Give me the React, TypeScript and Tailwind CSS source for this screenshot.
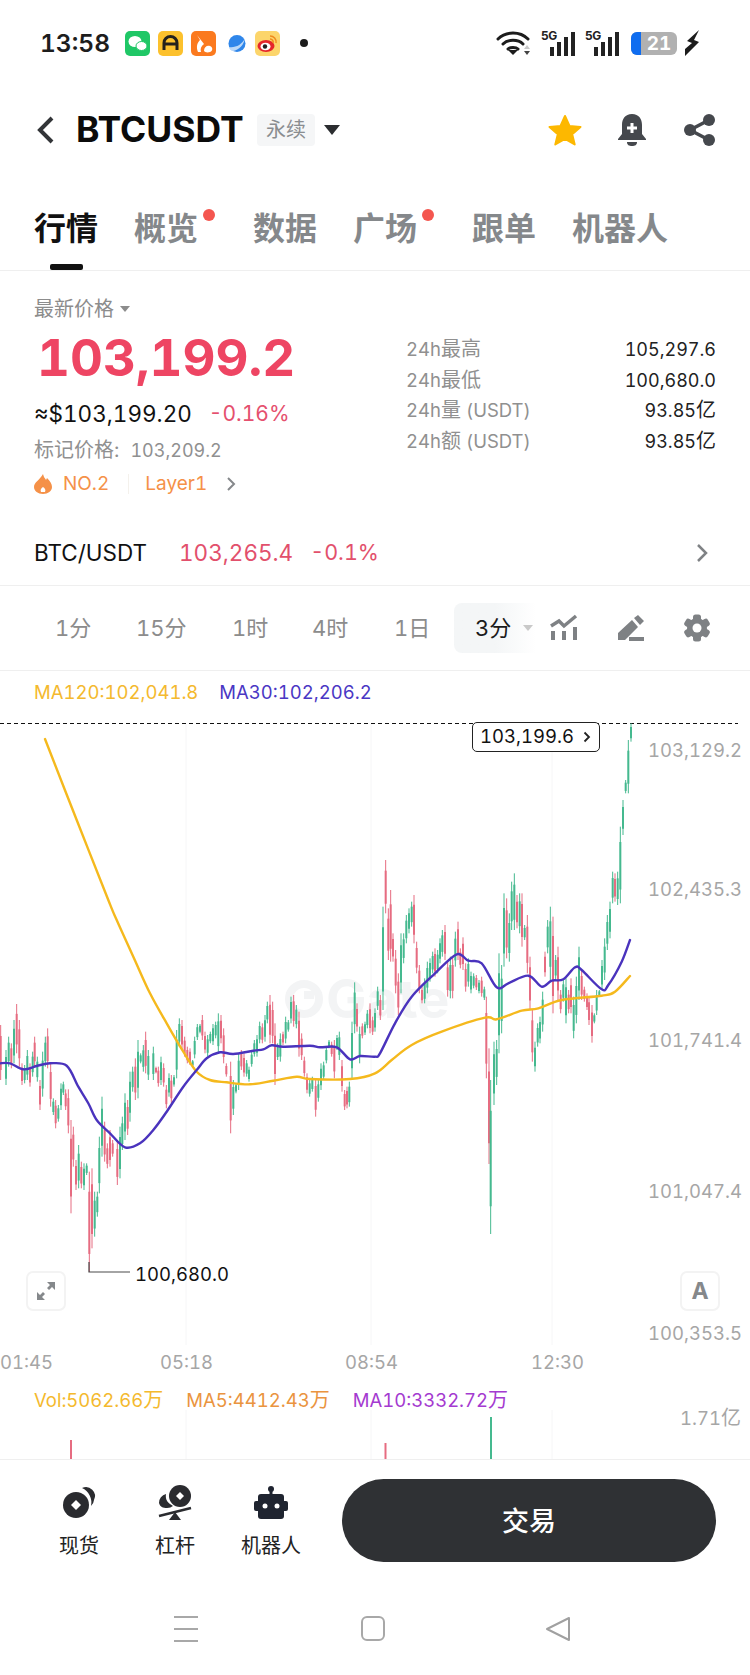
// Contract detail screen: status bar, ticker summary, candle chart, trade bar
type Candle = [number, number, number, number];

// candles read off the reference: x, wick top, wick bottom, 1 = up
const leftCandles: Candle[] = [
  [2,375,540,0],[18,450,555,1],[26,410,500,1],[34,430,505,0],[42,360,490,1],[50,312,460,0],[58,360,500,0],[66,490,555,0],[74,495,550,1],[82,450,540,1],
  [90,490,560,0],[98,455,530,1],[104,410,500,0],[112,470,545,1],[120,540,630,0],[128,455,590,1],[136,410,500,1],[143,385,505,0],[152,490,620,0],[160,595,645,1],
  [167,600,685,0],[175,615,665,1],[183,550,630,1],[190,545,585,1],[197,568,630,0],[205,568,700,0],[213,660,940,0],[220,680,800,0],[228,780,870,0],[236,735,865,1],
  [244,785,865,0],[252,790,870,1],[260,790,825,1],[268,815,1116,0],[276,805,1045,0],[284,875,1010,1],[292,875,950,1],[298,710,880,1],[306,590,770,1],[314,665,785,0],
  [322,730,805,0],[330,690,800,0],[338,720,770,0],[352,720,855,0],[360,680,835,1],[367,650,750,1],[375,580,720,1],[383,600,705,0],[390,515,665,1],[398,500,575,1],
  [406,475,600,0],[414,420,595,1],[422,460,490,1],[430,435,515,1],[437,395,520,0],[445,450,540,1],[460,440,540,1],[468,500,520,0],[475,500,560,0],[483,470,555,1],
  [491,490,560,0],[499,555,625,0],[507,520,590,1],[514,525,610,0],[522,525,560,1],[530,390,535,1],[538,355,440,1],[546,360,450,0],[554,410,470,0],[562,440,490,0],
  [570,445,495,0],[578,480,500,1],[584,410,475,1],[592,372,420,1],[600,372,400,1],[607,345,420,0],[615,395,460,0],[623,405,470,1],[631,395,430,1],[639,372,435,1],
  [647,365,415,1],[655,340,460,1],[663,345,430,0],[671,385,490,0],[679,490,530,0],[692,485,700,0],[700,540,645,1],[708,550,580,1],[716,460,570,1],[724,450,510,0],
  [732,460,530,0],[740,480,530,1],[747,500,545,1],[755,455,500,1],[763,420,470,1],[771,405,470,1],[779,365,430,1],[787,370,430,0],[795,345,425,1],[802,305,370,1],
  [810,285,430,0],[818,305,430,0],[825,370,555,0],[833,430,480,1],[841,400,485,1],[849,395,435,0],[857,350,430,1],[865,360,395,1],[873,290,370,1],[881,285,380,0],
  [889,315,385,1],[897,335,470,0],[905,400,480,0],[913,470,530,0],[921,520,580,0],[929,540,590,1],[937,530,575,1],[947,535,650,0],[955,540,605,1],[963,490,570,1],
  [971,485,540,1],[979,440,490,1],[987,420,445,1],[995,425,470,0],[1003,420,535,0],[1011,405,450,1],[1018,395,480,1],[1026,480,575,0],[1034,570,630,0],[1041,560,625,0],
  [1048,545,620,1],[1056,365,535,1],[1064,247,400,1],[1071,310,395,0],[1079,380,490,1],[1087,370,415,0],[1095,365,405,1],[1102,330,385,1],[1110,310,400,0],[1118,350,405,0],
];

const rightCandles: Candle[] = [
  [0,475,545,1],[8,410,480,1],[16,435,510,0],[24,170,480,1],[32,30,190,0],[40,175,330,0],[47,120,335,0],[54,250,335,0],[62,300,430,0],[70,370,495,0],
  [78,250,430,1],[86,250,340,1],[94,195,280,1],[102,175,250,1],[110,155,230,1],[117,135,280,0],[125,275,370,0],[133,345,430,0],[141,410,460,0],[149,385,460,1],
  [157,335,430,1],[165,325,395,1],[173,305,370,1],[180,295,380,0],[188,300,370,1],[195,265,340,1],[202,240,320,1],[210,225,330,0],[218,330,440,0],[226,320,445,1],
  [233,320,445,0],[241,245,350,1],[249,215,330,0],[256,295,355,0],[264,262,360,0],[272,340,425,0],[280,325,410,1],[288,365,430,1],[296,370,415,1],[304,375,420,0],
  [312,390,430,1],[320,380,440,0],[328,410,450,1],[334,440,685,0],[342,595,942,0],[347,690,1152,1],[357,575,765,1],[365,570,705,1],[372,310,610,1],[380,345,550,1],
  [387,130,350,1],[395,145,325,0],[403,190,335,1],[410,95,240,1],[418,70,240,1],[426,135,235,0],[434,130,250,1],[441,130,290,0],[449,225,270,1],[457,195,370,0],
  [465,320,480,0],[472,480,635,0],[480,575,665,1],[488,520,590,1],[495,500,580,1],[503,425,545,1],[510,305,380,0],[518,210,310,1],[526,170,390,1],[534,200,490,0],
  [542,315,390,1],[549,290,450,0],[557,420,490,0],[565,390,455,1],[573,385,520,1],[581,420,490,0],[588,385,490,0],[596,440,565,1],[604,380,520,1],[612,290,450,1],
  [620,360,450,0],[628,410,455,0],[636,430,480,0],[642,440,525,0],[651,465,578,0],[658,490,520,1],[665,420,495,1],[673,420,440,1],[681,330,420,1],[689,265,390,1],
  [697,195,300,1],[705,155,265,1],[713,65,160,1],[720,70,155,0],[728,65,165,1],
];

const topCandles: Candle[] = [
  [736,740,970,1],[744,660,765,1],[752,600,640,1],[760,480,640,1],[768,430,485,1],
];

const purpleA = [[0,490],[30,490],[70,508],[110,498],[150,490],[200,497],[235,560],[265,610],[290,660],[330,700],[375,742],[420,730],[460,690],[500,635],[550,560],[590,510],[620,475],[660,457],[700,462],[760,452],[790,448],[815,436],[850,440],[930,437],[960,442],[1010,442],[1050,478],[1080,468],[1125,470]];
const purpleB = [[15,610],[60,520],[110,440],[180,370],[245,313],[280,332],[320,340],[365,412],[400,400],[460,377],[500,410],[530,392],[565,388],[600,352],[620,360],[680,418],[700,405],[740,335],[765,270]];
const yellowA = [[135,-483],[230,-240],[325,0],[350,60],[400,170],[450,280],[500,370],[550,455],[590,515],[630,540],[680,547],[750,553],[820,542],[890,530],[930,537],[1050,537],[1125,520]];
const yellowB = [[50,630],[110,585],[200,545],[330,503],[365,508],[440,482],[490,475],[560,450],[680,437],[720,425],[765,378]];

const fromLeft = ([x, y]: number[]) => [x / 3, 900 + y / 3];
const fromRight = ([x, y]: number[]) => [375 + x / 3, 850 + y / 3];

function smooth(points: number[][]) {
  let d = `M${points[0][0]} ${points[0][1]}`;
  for (let i = 0; i < points.length - 1; i++) {
    const p0 = points[i - 1] ?? points[i];
    const p1 = points[i];
    const p2 = points[i + 1];
    const p3 = points[i + 2] ?? p2;
    const c1x = p1[0] + (p2[0] - p0[0]) / 6;
    const c1y = p1[1] + (p2[1] - p0[1]) / 6;
    const c2x = p2[0] - (p3[0] - p1[0]) / 6;
    const c2y = p2[1] - (p3[1] - p1[1]) / 6;
    d += ` C${c1x.toFixed(1)} ${c1y.toFixed(1)} ${c2x.toFixed(1)} ${c2y.toFixed(1)} ${p2[0].toFixed(1)} ${p2[1].toFixed(1)}`;
  }
  return d;
}

const candles = [
  ...leftCandles.map(([x, t, b, up]) => ({ x: x / 3, top: 900 + t / 3, bottom: 900 + b / 3, up })),
  ...rightCandles.map(([x, t, b, up]) => ({ x: 375 + x / 3, top: 850 + t / 3, bottom: 850 + b / 3, up })),
  ...topCandles.map(([x, t, b, up]) => ({ x: 375 + x / 3, top: 580 + t / 3, bottom: 580 + b / 3, up })),
];

function CandleChart() {
  return (
    <svg className="absolute inset-0 h-full w-full" viewBox="0 671 750 788">
      {[186, 371, 552].map((x) => (
        <g key={x} stroke="#f6f6f7" strokeWidth="1">
          <line x1={x} y1="724" x2={x} y2="1345" />
          <line x1={x} y1="1410" x2={x} y2="1459" />
        </g>
      ))}
      <circle cx="304" cy="999" r="15" fill="none" stroke="#f3f4f5" strokeWidth="8" />
      <rect x="304" y="991" width="10" height="8" fill="#f3f4f5" />
      <line x1="0" y1="723.5" x2="738" y2="723.5" stroke="#111" strokeWidth="1" strokeDasharray="4 3" />
      {candles.map((c, i) => {
        const color = c.up ? "#45b98f" : "#e66c81";
        const h = c.bottom - c.top;
        return (
          <g key={i} stroke={color}>
            <line x1={c.x} y1={c.top} x2={c.x} y2={c.bottom} strokeWidth="1" />
            <line x1={c.x} y1={c.top + h * 0.2} x2={c.x} y2={c.bottom - h * 0.18} strokeWidth="2" />
          </g>
        );
      })}
      <path d={smooth([...yellowA.map(fromLeft), ...yellowB.map(fromRight)])} fill="none" stroke="#f5b91d" strokeWidth="2.4" strokeLinecap="round" />
      <path d={smooth([...purpleA.map(fromLeft), ...purpleB.map(fromRight)])} fill="none" stroke="#4a33bd" strokeWidth="2.4" strokeLinecap="round" />
      <path d="M89 1262V1272H130" fill="none" stroke="#4a4a4a" strokeWidth="1.2" />
      <line x1="71" y1="1440" x2="71" y2="1459" stroke="#e66c81" strokeWidth="2" />
      <line x1="385.500" y1="1443" x2="385.500" y2="1459" stroke="#e66c81" strokeWidth="2" />
      <line x1="491" y1="1417" x2="491" y2="1459" stroke="#45b98f" strokeWidth="2" />
    </svg>
  );
}

function AppIcons() {
  return (
    <div className="ml-[17px] flex items-center">
      <svg width="25" height="25" viewBox="0 0 25 25">
        <rect width="25" height="25" rx="5" fill="#1fc766" />
        <ellipse cx="10" cy="10.500" rx="6.500" ry="5.500" fill="#fff" />
        <ellipse cx="16.500" cy="15" rx="5.500" ry="4.500" fill="#fff" stroke="#1fc766" />
      </svg>
      <svg className="ml-[8px]" width="25" height="25" viewBox="0 0 25 25">
        <rect width="25" height="25" rx="5" fill="#fcc12d" />
        <path d="M6 19v-7a6.500 6.500 0 0 1 13 0v7M6 13h13" fill="none" stroke="#24211c" strokeWidth="3" />
      </svg>
      <svg className="ml-[8px]" width="25" height="25" viewBox="0 0 25 25">
        <rect width="25" height="25" rx="5" fill="#fb7a1f" />
        <path d="M6 4l3 5c-3 3-4 7-2 12h3c-1-3 0-6 3-8M13 20c0-4 3-6 6-5s3 5 0 6-5 0-6-1z" fill="#fff" />
      </svg>
      <svg className="ml-[10px]" width="22" height="25" viewBox="0 0 22 25">
        <circle cx="11" cy="12.500" r="8.500" fill="#2f86ea" />
        <path d="M3 16c6 1 13-2 16-9-1 7-6 12-12 13-2 0-4-2-4-4z" fill="#bcd9f8" />
      </svg>
      <svg className="ml-[7px]" width="25" height="25" viewBox="0 0 25 25">
        <rect width="25" height="25" rx="5" fill="#fcd56b" />
        <ellipse cx="11" cy="15" rx="8.500" ry="6" fill="#e5262b" />
        <ellipse cx="10.500" cy="15.500" rx="5" ry="3.800" fill="#fff" />
        <circle cx="10" cy="15.500" r="2.200" fill="#222" />
        <path d="M15 5a6 6 0 0 1 6 7M15 8a3 3 0 0 1 3 4" fill="none" stroke="#f08a1d" strokeWidth="1.500" />
      </svg>
      <span className="ml-[20px] h-[8px] w-[8px] rounded-full bg-[#1c1c1c]" />
    </div>
  );
}

function Signal() {
  return (
    <div className="relative h-[26px] w-[34px]">
      <span className="absolute left-0 top-0 text-[12px] font-bold leading-[12px] tracking-[-0.5px] text-[#222]">5G</span>
      <div className="absolute bottom-0 right-0 flex items-end gap-[3px]">
        <span className="h-[9px] w-[4px] bg-[#222]" />
        <span className="h-[14px] w-[4px] bg-[#222]" />
        <span className="h-[19px] w-[4px] bg-[#222]" />
        <span className="h-[24px] w-[4px] bg-[#222]" />
      </div>
    </div>
  );
}

function StatusBar() {
  return (
    <div className="flex h-[86px] items-center pl-[40px] pr-[50px]">
      <span className="w-[68px] whitespace-nowrap text-[24.500px] font-semibold leading-none text-[#1d1d1d]">13:58</span>
      <AppIcons />
      <svg className="ml-auto" width="36" height="26" viewBox="0 0 36 26">
        <path d="M2 9c8-8 22-8 30 0M7 14c5-5 15-5 20 0M12 19c2-2 8-2 10 0" fill="none" stroke="#1c1c1c" strokeWidth="3" strokeLinecap="round" />
        <path d="M17 25l-5-5h10z" fill="#1c1c1c" />
        <path d="M31 15l3 4h-6z" fill="#c9c9c9" />
        <path d="M31 25l3-4h-6z" fill="#444" />
      </svg>
      <div className="ml-[9px]"><Signal /></div>
      <div className="ml-[10px]"><Signal /></div>
      <div className="ml-[12px] flex h-[23px] w-[46px] overflow-hidden rounded-[6px] bg-[#b1b1b1]">
        <span className="h-full w-[10px] bg-[#0f6df0]" />
        <span className="flex-1 text-center text-[19px] font-bold leading-[23px] text-white">21</span>
      </div>
      <svg className="ml-[8px]" width="15" height="26" viewBox="0 0 15 26">
        <path d="M14 0L2 11l5 2-7 6 0 7 14-14-5-2z" fill="#1c1c1c" />
      </svg>
    </div>
  );
}

function Header() {
  return (
    <div className="flex h-[88px] items-center pl-[37px] pr-[34px]">
      <svg width="18" height="28" viewBox="0 0 18 28">
        <path d="M15 2L3 14l12 12" fill="none" stroke="#333538" strokeWidth="4" />
      </svg>
      <h1 className="ml-[21px] w-[168px] whitespace-nowrap text-[35.500px] font-bold leading-none text-[#0b0b0b]">BTCUSDT</h1>
      <span className="ml-[13px] flex h-[32px] w-[58px] items-center justify-center rounded-[4px] bg-[#f5f6f7] text-[20px] text-[#8a8d90]">永续</span>
      <span className="ml-[9px] h-0 w-0 border-x-[8px] border-t-[10px] border-x-transparent border-t-[#2b2d30]" />
      <svg className="ml-auto" width="36" height="34" viewBox="0 0 36 34">
        <path d="M18 3l4.500 10 11 1-8.300 7.200 2.500 10.300L18 26l-9.700 5.500 2.500-10.300L2.500 14l11-1z" fill="#fdb800" stroke="#fdb800" strokeWidth="2" strokeLinejoin="round" />
      </svg>
      <svg className="ml-[33px]" width="32" height="34" viewBox="0 0 32 34">
        <path d="M16 1C9 1 6 6 6 12v9l-4 5v1h28v-1l-4-5v-9c0-6-3-11-10-11z" fill="#45484d" />
        <path d="M11 29h10c0 3-2 4-5 4s-5-1-5-4z" fill="#45484d" />
        <path d="M16 10v10M11 15h10" stroke="#fff" strokeWidth="3" />
      </svg>
      <svg className="ml-[35px]" width="33" height="34" viewBox="0 0 33 34">
        <path d="M26 7L7 17l19 10" fill="none" stroke="#45484d" strokeWidth="3.500" />
        <circle cx="26" cy="7" r="6" fill="#45484d" />
        <circle cx="7" cy="17" r="6" fill="#45484d" />
        <circle cx="26" cy="27" r="6" fill="#45484d" />
      </svg>
    </div>
  );
}

function Tabs() {
  const tabs = [
    { label: "行情", left: "ml-0", active: true },
    { label: "概览", left: "ml-[36px]", dot: true },
    { label: "数据", left: "ml-[55px]" },
    { label: "广场", left: "ml-[36px]", dot: true },
    { label: "跟单", left: "ml-[55px]" },
    { label: "机器人", left: "ml-[36px]" },
  ];
  return (
    <div className="flex h-[97px] border-b border-[#efefef] pl-[34px] pt-[37px]">
      {tabs.map((tab) => (
        <div
          key={tab.label}
          className={`relative h-[36px] text-[32px] font-bold leading-[36px] ${tab.left} ${tab.active ? "text-[#111]" : "text-[#85888b]"}`}
        >
          {tab.label}
          {tab.dot && <span className="absolute -right-[17px] -top-[2px] h-[12px] w-[12px] rounded-full bg-[#f4564f]" />}
          {tab.active && <span className="absolute left-[16px] top-[53px] h-[6px] w-[33px] rounded-[2px] bg-[#111]" />}
        </div>
      ))}
    </div>
  );
}

function Summary() {
  const stats = [
    ["24h", "最高", "", "105,297.6", ""],
    ["24h", "最低", "", "100,680.0", ""],
    ["24h", "量", " (USDT)", "93.85", "亿"],
    ["24h", "额", " (USDT)", "93.85", "亿"],
  ];
  return (
    <div className="flex h-[238px] pl-[34px] pr-[34px]">
      <div className="flex-1 pt-[26px]">
        <div className="flex h-[24px] items-center text-[20px] text-[#8c8c8c]">
          最新价格
          <span className="ml-[6px] h-0 w-0 border-x-[5px] border-t-[6px] border-x-transparent border-t-[#8c8c8c]" />
        </div>
        <div className="ml-[3px] mt-[8px] h-[58px] text-[51px] font-bold leading-[58px] text-[#ee4563]">103,199.2</div>
        <div className="mt-[13px] flex h-[28px] items-center text-[22.500px]">
          <span className="text-[#111]">≈$103,199.20</span>
          <span className="ml-[17px] text-[21px] text-[#e5506e]">-0.16%</span>
        </div>
        <div className="mt-[9px] flex h-[26px] items-center text-[20px] text-[#909090]">
          标记价格:<span className="ml-[11px] text-[18px]">103,209.2</span>
        </div>
        <div className="mt-[8px] flex h-[26px] items-center text-[19px] text-[#f59148]">
          <svg width="18" height="20" viewBox="0 0 18 20">
            <path d="M9 0c1 4 2 4 3 6l1-2c3 3 5 6 5 9 0 4-4 7-9 7s-9-3-9-7c0-5 6-7 9-13zM9 13c-2 1-3 3-2 5h4c1-2 0-4-2-5z" fill="#f59148" fillRule="evenodd" />
          </svg>
          <span className="ml-[11px]">NO.2</span>
          <span className="ml-[19px] h-[20px] w-px bg-[#f4f1ec]" />
          <span className="ml-[16px]">Layer1</span>
          <svg className="ml-[19px]" width="10" height="16" viewBox="0 0 10 16">
            <path d="M2 2l6 6-6 6" fill="none" stroke="#85888b" strokeWidth="2" />
          </svg>
        </div>
      </div>
      <div className="w-[310px] pt-[63px]">
        {stats.map(([pre, cjk, unit, value, suffix]) => (
          <div key={cjk} className="flex h-[30.500px] items-center justify-between text-[18.500px]">
            <span className="text-[#909090]">{pre}<span className="text-[20px]">{cjk}</span>{unit}</span>
            <span className="text-[18px] text-[#222]">{value}<span className="text-[20px]">{suffix}</span></span>
          </div>
        ))}
      </div>
    </div>
  );
}

function SpotRow() {
  return (
    <div className="flex h-[77px] items-center border-b border-[#efefef] pl-[34px] pr-[40px] pt-[11px] text-[22.500px]">
      <span className="w-[118px] text-[#111]">BTC/USDT</span>
      <span className="ml-[27px] text-[#e2506c]">103,265.4</span>
      <span className="ml-[17px] text-[21.500px] text-[#e2506c]">-0.1%</span>
      <svg className="ml-auto" width="15" height="22" viewBox="0 0 15 22">
        <path d="M3 3l8 8-8 8" fill="none" stroke="#7f8285" strokeWidth="2.500" />
      </svg>
    </div>
  );
}

function Timeframes() {
  return (
    <div className="flex h-[85px] items-center border-b border-[#efefef] pl-[55px] text-[22px] text-[#8c8c8c]">
      <span className="w-[81px]">1分</span>
      <span className="w-[96px]">15分</span>
      <span className="w-[80px]">1时</span>
      <span className="w-[82px]">4时</span>
      <span className="w-[60px]">1日</span>
      <div className="flex h-[50px] w-[82px] items-center rounded-l-[8px] bg-linear-to-r from-[#f4f6f7] via-[#f4f6f7] to-white pl-[21px] text-[#1b1b1b]">
        3分
        <span className="ml-[12px] h-0 w-0 border-x-[5px] border-t-[6px] border-x-transparent border-t-[#c9c9c9]" />
      </div>
      <svg className="ml-[14px]" width="28" height="28" viewBox="0 0 28 28">
        <path d="M1 12l8-5 5 5 12-10" fill="none" stroke="#7e8184" strokeWidth="3.500" />
        <path d="M1 17h4v9H1zM12 17h4v9h-4zM23 13h4v13h-4z" fill="#7e8184" />
      </svg>
      <svg className="ml-[39px]" width="28" height="28" viewBox="0 0 28 28">
        <path d="M1 26v-7L15 6l6 7-13 13zM17 4l4-3 6 6-4 4z" fill="#7e8184" />
        <rect x="12" y="23" width="15" height="4" fill="#7e8184" />
      </svg>
      <svg className="ml-[39px]" width="26" height="28" viewBox="0 0 26 28">
        <circle cx="13" cy="14" r="10" fill="#7e8184" />
        {[0, 60, 120, 180, 240, 300].map((a) => (
          <rect key={a} x="9" y="0.500" width="8" height="8" rx="2.500" fill="#7e8184" transform={`rotate(${a} 13 14)`} />
        ))}
        <circle cx="13" cy="14" r="4.500" fill="#fff" />
      </svg>
    </div>
  );
}

function Chart() {
  const axis = [
    ["103,129.2", "top-[67px]"],
    ["102,435.3", "top-[206px]"],
    ["101,741.4", "top-[357px]"],
    ["101,047.4", "top-[508px]"],
    ["100,353.5", "top-[650px]"],
  ];
  const times = [
    ["01:45", "left-0"],
    ["05:18", "left-[160px]"],
    ["08:54", "left-[345px]"],
    ["12:30", "left-[531px]"],
  ];
  return (
    <div className="relative h-[788px] overflow-hidden">
      <div className="absolute left-[326px] top-[299px] text-[54px] font-bold leading-[58px] text-[#f3f4f5]">Gate</div>
      <CandleChart />
      <div className="relative flex h-[44px] items-center pl-[34px] text-[18.500px]">
        <span className="text-[#f4b92e]">MA120:102,041.8</span>
        <span className="ml-[21px] text-[#4a37c4]">MA30:102,206.2</span>
      </div>
      <div className="absolute left-[472px] top-[51px] flex h-[30px] w-[128px] items-center rounded-[5px] border border-[#222] bg-white pl-[7px] text-[18.500px] text-[#111]">
        103,199.6
        <svg className="ml-[9px]" width="8" height="12" viewBox="0 0 8 12">
          <path d="M1.500 1.500L6 6l-4.500 4.500" fill="none" stroke="#222" strokeWidth="1.800" />
        </svg>
      </div>
      {axis.map(([label, top]) => (
        <span key={label} className={`absolute right-[8px] text-[18.500px] leading-[24px] text-[#a6a6a6] ${top}`}>{label}</span>
      ))}
      {times.map(([label, left]) => (
        <span key={label} className={`absolute top-[679px] text-[18.500px] leading-[24px] text-[#a6a6a6] ${left}`}>{label}</span>
      ))}
      <span className="absolute left-[135px] top-[591px] text-[18.500px] leading-[24px] text-[#111]">100,680.0</span>
      <button className="absolute left-[26px] top-[600px] flex h-[40px] w-[40px] items-center justify-center rounded-[7px] border-2 border-[#f3f3f3] bg-white">
        <svg width="20" height="20" viewBox="0 0 20 20">
          <path d="M19 1v8l-3-3-3 3-2-2 3-3-3-3zM1 19v-8l3 3 3-3 2 2-3 3 3 3z" fill="#85888b" />
        </svg>
      </button>
      <button className="absolute left-[680px] top-[600px] flex h-[40px] w-[40px] items-center justify-center rounded-[7px] border-2 border-[#f3f3f3] bg-white text-[23px] font-bold text-[#85888b]">A</button>
      <div className="absolute left-[34px] top-[717px] flex h-[24px] items-center text-[18.500px]">
        <span className="text-[#f4b92e]">Vol:5062.66<span className="text-[20px]">万</span></span>
        <span className="ml-[23px] text-[#ea9440]">MA5:4412.43<span className="text-[20px]">万</span></span>
        <span className="ml-[23px] text-[#a43ad0]">MA10:3332.72<span className="text-[20px]">万</span></span>
      </div>
      <span className="absolute right-[9px] top-[735px] text-[18.500px] leading-[24px] text-[#a6a6a6]">1.71<span className="text-[20px]">亿</span></span>
    </div>
  );
}

function TradeBar() {
  return (
    <div className="flex h-[121px] border-t border-[#efefef] pl-[31px] pr-[34px]">
      <div className="flex w-[96px] flex-col items-center pt-[25px]">
        <svg width="36" height="36" viewBox="0 0 36 36">
          <path d="M21 3a9 9 0 0 1 12 12 9 9 0 0 1-3 6A16 16 0 0 0 21 3z" fill="#2a2b2f" />
          <circle cx="15" cy="20" r="13" fill="#2a2b2f" />
          <path d="M15 15l5 5-5 5-5-5z" fill="#fff" />
        </svg>
        <span className="mt-[13px] text-[20px] leading-[24px] text-[#222]">现货</span>
      </div>
      <div className="flex w-[96px] flex-col items-center pt-[25px]">
        <svg width="36" height="36" viewBox="0 0 36 36">
          <circle cx="23" cy="11" r="11" fill="#2a2b2f" />
          <path d="M23 7l4 4-4 4-4-4z" fill="#fff" />
          <path d="M9 9a9 9 0 0 0-7 9c1 4 4 5 8 5 3 0 4-1 6-2-5-3-8-6-7-12z" fill="#2a2b2f" />
          <path d="M2 31l32-8" stroke="#2a2b2f" strokeWidth="2.500" />
          <path d="M18 27l6 8H12z" fill="#2a2b2f" />
        </svg>
        <span className="mt-[13px] text-[20px] leading-[24px] text-[#222]">杠杆</span>
      </div>
      <div className="flex w-[96px] flex-col items-center pt-[25px]">
        <svg width="36" height="36" viewBox="0 0 36 36">
          <circle cx="18" cy="4" r="3" fill="#1f2430" />
          <rect x="16.500" y="4" width="3" height="6" fill="#1f2430" />
          <rect x="5" y="9" width="26" height="25" rx="3" fill="#1f2430" />
          <rect x="1" y="16" width="34" height="10" rx="2" fill="#1f2430" />
          <circle cx="12" cy="21" r="2.500" fill="#fff" />
          <circle cx="24" cy="21" r="2.500" fill="#fff" />
        </svg>
        <span className="mt-[13px] text-[20px] leading-[24px] text-[#222]">机器人</span>
      </div>
      <button className="ml-auto mt-[19px] flex h-[83px] w-[374px] items-center justify-center rounded-full bg-[#2f3134] pt-[3px] text-[27px] font-medium text-white">交易</button>
    </div>
  );
}

function NavBar() {
  return (
    <div className="flex h-[95px] items-center pt-[2px] pl-[174px]">
      <svg width="24" height="26" viewBox="0 0 24 26">
        <path d="M0 1h24M0 13h24M0 25h24" stroke="#a8a8a8" strokeWidth="2" />
      </svg>
      <span className="ml-[163px] h-[25px] w-[24px] rounded-[6px] border-2 border-[#a8a8a8]" />
      <svg className="ml-[160px]" width="26" height="26" viewBox="0 0 26 26">
        <path d="M2 13L24 2v22z" fill="none" stroke="#a0a0a0" strokeWidth="2" strokeLinejoin="round" />
      </svg>
    </div>
  );
}

export default function App() {
  return (
    <div className="h-[1675px] w-[750px] overflow-hidden bg-white font-['Inter','Noto_Sans_CJK_SC',sans-serif] tabular-nums">
      <StatusBar />
      <Header />
      <Tabs />
      <Summary />
      <SpotRow />
      <Timeframes />
      <Chart />
      <TradeBar />
      <NavBar />
    </div>
  );
}
